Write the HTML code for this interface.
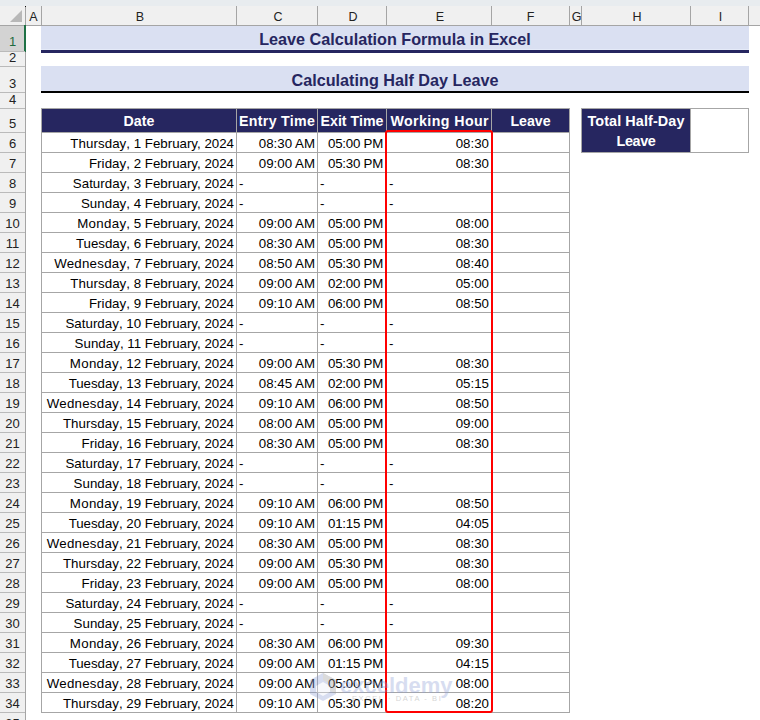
<!DOCTYPE html>
<html><head><meta charset="utf-8"><style>
html,body{margin:0;padding:0;}
body{width:760px;height:720px;overflow:hidden;position:relative;background:#fff;font-family:"Liberation Sans",sans-serif;}
body>div{position:absolute;box-sizing:content-box;}
.ch{text-align:center;font-size:12.5px;line-height:20px;color:#222;}
.rh{text-align:center;font-size:13px;}
.t1{text-align:center;font-weight:bold;font-size:16.2px;line-height:26px;color:#262660;}
.th{text-align:center;font-weight:bold;font-size:14.2px;line-height:24px;color:#fff;white-space:nowrap;}
.th2{text-align:center;font-weight:bold;font-size:14.4px;line-height:20px;color:#fff;white-space:nowrap;padding-top:2px;}
.td{text-align:right;font-size:13.3px;line-height:20px;color:#000;white-space:nowrap;}
.dash{text-align:left;}
</style></head><body>
<div style="left:0px;top:0px;width:760px;height:6px;background:#e8ecef"></div>
<div style="left:0px;top:6px;width:760px;height:19px;background:#f0f0f0"></div>
<div style="left:0px;top:25px;width:760px;height:1px;background:#a5a5a5"></div>
<svg style="position:absolute;left:0;top:6px" width="25" height="19"><polygon points="22,4 22,16 10,16" fill="#b8b8b8"/></svg>
<div style="left:25px;top:6px;width:1px;height:19px;background:#a5a5a5"></div>
<div class="ch" style="left:26px;top:7px;width:15px;height:19px;">A</div>
<div style="left:41px;top:6px;width:1px;height:19px;background:#a5a5a5"></div>
<div class="ch" style="left:43px;top:7px;width:194px;height:19px;">B</div>
<div style="left:236px;top:6px;width:1px;height:19px;background:#a5a5a5"></div>
<div class="ch" style="left:238px;top:7px;width:80px;height:19px;">C</div>
<div style="left:317px;top:6px;width:1px;height:19px;background:#a5a5a5"></div>
<div class="ch" style="left:319px;top:7px;width:68px;height:19px;">D</div>
<div style="left:386px;top:6px;width:1px;height:19px;background:#a5a5a5"></div>
<div class="ch" style="left:388px;top:7px;width:104px;height:19px;">E</div>
<div style="left:491px;top:6px;width:1px;height:19px;background:#a5a5a5"></div>
<div class="ch" style="left:492px;top:7px;width:77px;height:19px;">F</div>
<div style="left:569px;top:6px;width:1px;height:19px;background:#a5a5a5"></div>
<div class="ch" style="left:571px;top:7px;width:11px;height:19px;">G</div>
<div style="left:581px;top:6px;width:1px;height:19px;background:#a5a5a5"></div>
<div class="ch" style="left:583px;top:7px;width:108px;height:19px;">H</div>
<div style="left:690px;top:6px;width:1px;height:19px;background:#a5a5a5"></div>
<div class="ch" style="left:692px;top:7px;width:57px;height:19px;">I</div>
<div style="left:748px;top:6px;width:1px;height:19px;background:#a5a5a5"></div>
<div style="left:0px;top:26px;width:25px;height:694px;background:#f0f0f0"></div>
<div style="left:25px;top:26px;width:1px;height:694px;background:#a5a5a5"></div>
<div style="left:0px;top:26px;width:24px;height:25px;background:#d3d3d3"></div>
<div style="left:24px;top:25px;width:2px;height:27px;background:#1e7145"></div>
<div style="left:25px;top:6px;width:1px;height:1px;background:#111"></div>
<div style="left:0px;top:51px;width:25px;height:1px;background:#bababa"></div>
<div class="rh" style="left:0px;top:32px;width:25px;height:20px;line-height:20px;color:#1e6b3e">1</div>
<div style="left:0px;top:66px;width:25px;height:1px;background:#bababa"></div>
<div class="rh" style="left:0px;top:48px;width:25px;height:20px;line-height:20px;color:#222">2</div>
<div style="left:0px;top:92px;width:25px;height:1px;background:#bababa"></div>
<div class="rh" style="left:0px;top:74px;width:25px;height:20px;line-height:20px;color:#222">3</div>
<div style="left:0px;top:108px;width:25px;height:1px;background:#bababa"></div>
<div class="rh" style="left:0px;top:90px;width:25px;height:20px;line-height:20px;color:#222">4</div>
<div style="left:0px;top:132px;width:25px;height:1px;background:#bababa"></div>
<div class="rh" style="left:0px;top:114px;width:25px;height:20px;line-height:20px;color:#222">5</div>
<div style="left:0px;top:152px;width:25px;height:1px;background:#bababa"></div>
<div class="rh" style="left:0px;top:134px;width:25px;height:20px;line-height:20px;color:#222">6</div>
<div style="left:0px;top:172px;width:25px;height:1px;background:#bababa"></div>
<div class="rh" style="left:0px;top:154px;width:25px;height:20px;line-height:20px;color:#222">7</div>
<div style="left:0px;top:192px;width:25px;height:1px;background:#bababa"></div>
<div class="rh" style="left:0px;top:174px;width:25px;height:20px;line-height:20px;color:#222">8</div>
<div style="left:0px;top:212px;width:25px;height:1px;background:#bababa"></div>
<div class="rh" style="left:0px;top:194px;width:25px;height:20px;line-height:20px;color:#222">9</div>
<div style="left:0px;top:232px;width:25px;height:1px;background:#bababa"></div>
<div class="rh" style="left:0px;top:214px;width:25px;height:20px;line-height:20px;color:#222">10</div>
<div style="left:0px;top:252px;width:25px;height:1px;background:#bababa"></div>
<div class="rh" style="left:0px;top:234px;width:25px;height:20px;line-height:20px;color:#222">11</div>
<div style="left:0px;top:272px;width:25px;height:1px;background:#bababa"></div>
<div class="rh" style="left:0px;top:254px;width:25px;height:20px;line-height:20px;color:#222">12</div>
<div style="left:0px;top:292px;width:25px;height:1px;background:#bababa"></div>
<div class="rh" style="left:0px;top:274px;width:25px;height:20px;line-height:20px;color:#222">13</div>
<div style="left:0px;top:312px;width:25px;height:1px;background:#bababa"></div>
<div class="rh" style="left:0px;top:294px;width:25px;height:20px;line-height:20px;color:#222">14</div>
<div style="left:0px;top:332px;width:25px;height:1px;background:#bababa"></div>
<div class="rh" style="left:0px;top:314px;width:25px;height:20px;line-height:20px;color:#222">15</div>
<div style="left:0px;top:352px;width:25px;height:1px;background:#bababa"></div>
<div class="rh" style="left:0px;top:334px;width:25px;height:20px;line-height:20px;color:#222">16</div>
<div style="left:0px;top:372px;width:25px;height:1px;background:#bababa"></div>
<div class="rh" style="left:0px;top:354px;width:25px;height:20px;line-height:20px;color:#222">17</div>
<div style="left:0px;top:392px;width:25px;height:1px;background:#bababa"></div>
<div class="rh" style="left:0px;top:374px;width:25px;height:20px;line-height:20px;color:#222">18</div>
<div style="left:0px;top:412px;width:25px;height:1px;background:#bababa"></div>
<div class="rh" style="left:0px;top:394px;width:25px;height:20px;line-height:20px;color:#222">19</div>
<div style="left:0px;top:432px;width:25px;height:1px;background:#bababa"></div>
<div class="rh" style="left:0px;top:414px;width:25px;height:20px;line-height:20px;color:#222">20</div>
<div style="left:0px;top:452px;width:25px;height:1px;background:#bababa"></div>
<div class="rh" style="left:0px;top:434px;width:25px;height:20px;line-height:20px;color:#222">21</div>
<div style="left:0px;top:472px;width:25px;height:1px;background:#bababa"></div>
<div class="rh" style="left:0px;top:454px;width:25px;height:20px;line-height:20px;color:#222">22</div>
<div style="left:0px;top:492px;width:25px;height:1px;background:#bababa"></div>
<div class="rh" style="left:0px;top:474px;width:25px;height:20px;line-height:20px;color:#222">23</div>
<div style="left:0px;top:512px;width:25px;height:1px;background:#bababa"></div>
<div class="rh" style="left:0px;top:494px;width:25px;height:20px;line-height:20px;color:#222">24</div>
<div style="left:0px;top:532px;width:25px;height:1px;background:#bababa"></div>
<div class="rh" style="left:0px;top:514px;width:25px;height:20px;line-height:20px;color:#222">25</div>
<div style="left:0px;top:552px;width:25px;height:1px;background:#bababa"></div>
<div class="rh" style="left:0px;top:534px;width:25px;height:20px;line-height:20px;color:#222">26</div>
<div style="left:0px;top:572px;width:25px;height:1px;background:#bababa"></div>
<div class="rh" style="left:0px;top:554px;width:25px;height:20px;line-height:20px;color:#222">27</div>
<div style="left:0px;top:592px;width:25px;height:1px;background:#bababa"></div>
<div class="rh" style="left:0px;top:574px;width:25px;height:20px;line-height:20px;color:#222">28</div>
<div style="left:0px;top:612px;width:25px;height:1px;background:#bababa"></div>
<div class="rh" style="left:0px;top:594px;width:25px;height:20px;line-height:20px;color:#222">29</div>
<div style="left:0px;top:632px;width:25px;height:1px;background:#bababa"></div>
<div class="rh" style="left:0px;top:614px;width:25px;height:20px;line-height:20px;color:#222">30</div>
<div style="left:0px;top:652px;width:25px;height:1px;background:#bababa"></div>
<div class="rh" style="left:0px;top:634px;width:25px;height:20px;line-height:20px;color:#222">31</div>
<div style="left:0px;top:672px;width:25px;height:1px;background:#bababa"></div>
<div class="rh" style="left:0px;top:654px;width:25px;height:20px;line-height:20px;color:#222">32</div>
<div style="left:0px;top:692px;width:25px;height:1px;background:#bababa"></div>
<div class="rh" style="left:0px;top:674px;width:25px;height:20px;line-height:20px;color:#222">33</div>
<div style="left:0px;top:712px;width:25px;height:1px;background:#bababa"></div>
<div class="rh" style="left:0px;top:694px;width:25px;height:20px;line-height:20px;color:#222">34</div>
<div style="left:0px;top:732px;width:25px;height:1px;background:#bababa"></div>
<div class="rh" style="left:0px;top:714px;width:25px;height:20px;line-height:20px;color:#222">35</div>
<div style="left:41px;top:26px;width:708px;height:23px;background:#dae0f2"></div>
<div style="left:41px;top:49px;width:708px;height:1px;background:#e4eaf8"></div>
<div style="left:41px;top:50px;width:708px;height:3px;background:#262660"></div>
<div class="t1" style="left:41px;top:26px;width:708px;height:24px;">Leave Calculation Formula in Excel</div>
<div style="left:41px;top:66px;width:708px;height:25px;background:#dae0f2"></div>
<div style="left:41px;top:91px;width:708px;height:2px;background:#000"></div>
<div class="t1" style="left:41px;top:67px;width:708px;height:25px;">Calculating Half Day Leave</div>
<div style="left:41px;top:108px;width:529px;height:25px;background:#a6a6a6"></div>
<div style="left:42px;top:109px;width:194px;height:23px;background:#262660"></div>
<div class="th" style="left:42px;top:109px;width:194px;height:23px;">Date</div>
<div style="left:237px;top:109px;width:80px;height:23px;background:#262660"></div>
<div class="th" style="left:237px;top:109px;width:80px;height:23px;letter-spacing:0.3px;text-indent:0.3px;">Entry Time</div>
<div style="left:318px;top:109px;width:68px;height:23px;background:#262660"></div>
<div class="th" style="left:318px;top:109px;width:68px;height:23px;">Exit Time</div>
<div style="left:387px;top:109px;width:104px;height:23px;background:#262660"></div>
<div class="th" style="left:387px;top:109px;width:104px;height:23px;letter-spacing:0.42px;text-indent:1.5px;">Working Hour</div>
<div style="left:492px;top:109px;width:77px;height:23px;background:#262660"></div>
<div class="th" style="left:492px;top:109px;width:77px;height:23px;">Leave</div>
<div style="left:41px;top:132px;width:529px;height:581px;background:#a6a6a6"></div>
<div style="left:42px;top:133px;width:194px;height:19px;background:#fff"></div>
<div style="left:237px;top:133px;width:80px;height:19px;background:#fff"></div>
<div style="left:318px;top:133px;width:68px;height:19px;background:#fff"></div>
<div style="left:387px;top:133px;width:104px;height:19px;background:#fff"></div>
<div style="left:492px;top:133px;width:77px;height:19px;background:#fff"></div>
<div class="td" style="left:42px;top:134px;width:192px;height:19px;"><span style="letter-spacing:0.075px">Thursday</span>, 1 February, 2024</div>
<div class="td" style="left:237px;top:134px;width:78px;height:19px;">08:30 AM</div>
<div class="td" style="left:318px;top:134px;width:65px;height:19px;letter-spacing:-0.25px;">05:00 PM</div>
<div class="td" style="left:387px;top:134px;width:102px;height:19px;">08:30</div>
<div style="left:42px;top:153px;width:194px;height:19px;background:#fff"></div>
<div style="left:237px;top:153px;width:80px;height:19px;background:#fff"></div>
<div style="left:318px;top:153px;width:68px;height:19px;background:#fff"></div>
<div style="left:387px;top:153px;width:104px;height:19px;background:#fff"></div>
<div style="left:492px;top:153px;width:77px;height:19px;background:#fff"></div>
<div class="td" style="left:42px;top:154px;width:192px;height:19px;"><span style="letter-spacing:0.083px">Friday</span>, 2 February, 2024</div>
<div class="td" style="left:237px;top:154px;width:78px;height:19px;">09:00 AM</div>
<div class="td" style="left:318px;top:154px;width:65px;height:19px;letter-spacing:-0.25px;">05:30 PM</div>
<div class="td" style="left:387px;top:154px;width:102px;height:19px;">08:30</div>
<div style="left:42px;top:173px;width:194px;height:19px;background:#fff"></div>
<div style="left:237px;top:173px;width:80px;height:19px;background:#fff"></div>
<div style="left:318px;top:173px;width:68px;height:19px;background:#fff"></div>
<div style="left:387px;top:173px;width:104px;height:19px;background:#fff"></div>
<div style="left:492px;top:173px;width:77px;height:19px;background:#fff"></div>
<div class="td" style="left:42px;top:174px;width:192px;height:19px;"><span style="letter-spacing:0.037px">Saturday</span>, 3 February, 2024</div>
<div class="td dash" style="left:239px;top:174px;width:78px;height:19px;">-</div>
<div class="td dash" style="left:320px;top:174px;width:66px;height:19px;">-</div>
<div class="td dash" style="left:389px;top:174px;width:102px;height:19px;">-</div>
<div style="left:42px;top:193px;width:194px;height:19px;background:#fff"></div>
<div style="left:237px;top:193px;width:80px;height:19px;background:#fff"></div>
<div style="left:318px;top:193px;width:68px;height:19px;background:#fff"></div>
<div style="left:387px;top:193px;width:104px;height:19px;background:#fff"></div>
<div style="left:492px;top:193px;width:77px;height:19px;background:#fff"></div>
<div class="td" style="left:42px;top:194px;width:192px;height:19px;"><span style="letter-spacing:0.050px">Sunday</span>, 4 February, 2024</div>
<div class="td dash" style="left:239px;top:194px;width:78px;height:19px;">-</div>
<div class="td dash" style="left:320px;top:194px;width:66px;height:19px;">-</div>
<div class="td dash" style="left:389px;top:194px;width:102px;height:19px;">-</div>
<div style="left:42px;top:213px;width:194px;height:19px;background:#fff"></div>
<div style="left:237px;top:213px;width:80px;height:19px;background:#fff"></div>
<div style="left:318px;top:213px;width:68px;height:19px;background:#fff"></div>
<div style="left:387px;top:213px;width:104px;height:19px;background:#fff"></div>
<div style="left:492px;top:213px;width:77px;height:19px;background:#fff"></div>
<div class="td" style="left:42px;top:214px;width:192px;height:19px;"><span style="letter-spacing:0.300px">Monday</span>, 5 February, 2024</div>
<div class="td" style="left:237px;top:214px;width:78px;height:19px;">09:00 AM</div>
<div class="td" style="left:318px;top:214px;width:65px;height:19px;letter-spacing:-0.25px;">05:00 PM</div>
<div class="td" style="left:387px;top:214px;width:102px;height:19px;">08:00</div>
<div style="left:42px;top:233px;width:194px;height:19px;background:#fff"></div>
<div style="left:237px;top:233px;width:80px;height:19px;background:#fff"></div>
<div style="left:318px;top:233px;width:68px;height:19px;background:#fff"></div>
<div style="left:387px;top:233px;width:104px;height:19px;background:#fff"></div>
<div style="left:492px;top:233px;width:77px;height:19px;background:#fff"></div>
<div class="td" style="left:42px;top:234px;width:192px;height:19px;"><span style="letter-spacing:-0.029px">Tuesday</span>, 6 February, 2024</div>
<div class="td" style="left:237px;top:234px;width:78px;height:19px;">08:30 AM</div>
<div class="td" style="left:318px;top:234px;width:65px;height:19px;letter-spacing:-0.25px;">05:00 PM</div>
<div class="td" style="left:387px;top:234px;width:102px;height:19px;">08:30</div>
<div style="left:42px;top:253px;width:194px;height:19px;background:#fff"></div>
<div style="left:237px;top:253px;width:80px;height:19px;background:#fff"></div>
<div style="left:318px;top:253px;width:68px;height:19px;background:#fff"></div>
<div style="left:387px;top:253px;width:104px;height:19px;background:#fff"></div>
<div style="left:492px;top:253px;width:77px;height:19px;background:#fff"></div>
<div class="td" style="left:42px;top:254px;width:192px;height:19px;"><span style="letter-spacing:0.244px">Wednesday</span>, 7 February, 2024</div>
<div class="td" style="left:237px;top:254px;width:78px;height:19px;">08:50 AM</div>
<div class="td" style="left:318px;top:254px;width:65px;height:19px;letter-spacing:-0.25px;">05:30 PM</div>
<div class="td" style="left:387px;top:254px;width:102px;height:19px;">08:40</div>
<div style="left:42px;top:273px;width:194px;height:19px;background:#fff"></div>
<div style="left:237px;top:273px;width:80px;height:19px;background:#fff"></div>
<div style="left:318px;top:273px;width:68px;height:19px;background:#fff"></div>
<div style="left:387px;top:273px;width:104px;height:19px;background:#fff"></div>
<div style="left:492px;top:273px;width:77px;height:19px;background:#fff"></div>
<div class="td" style="left:42px;top:274px;width:192px;height:19px;"><span style="letter-spacing:0.075px">Thursday</span>, 8 February, 2024</div>
<div class="td" style="left:237px;top:274px;width:78px;height:19px;">09:00 AM</div>
<div class="td" style="left:318px;top:274px;width:65px;height:19px;letter-spacing:-0.25px;">02:00 PM</div>
<div class="td" style="left:387px;top:274px;width:102px;height:19px;">05:00</div>
<div style="left:42px;top:293px;width:194px;height:19px;background:#fff"></div>
<div style="left:237px;top:293px;width:80px;height:19px;background:#fff"></div>
<div style="left:318px;top:293px;width:68px;height:19px;background:#fff"></div>
<div style="left:387px;top:293px;width:104px;height:19px;background:#fff"></div>
<div style="left:492px;top:293px;width:77px;height:19px;background:#fff"></div>
<div class="td" style="left:42px;top:294px;width:192px;height:19px;"><span style="letter-spacing:0.083px">Friday</span>, 9 February, 2024</div>
<div class="td" style="left:237px;top:294px;width:78px;height:19px;">09:10 AM</div>
<div class="td" style="left:318px;top:294px;width:65px;height:19px;letter-spacing:-0.25px;">06:00 PM</div>
<div class="td" style="left:387px;top:294px;width:102px;height:19px;">08:50</div>
<div style="left:42px;top:313px;width:194px;height:19px;background:#fff"></div>
<div style="left:237px;top:313px;width:80px;height:19px;background:#fff"></div>
<div style="left:318px;top:313px;width:68px;height:19px;background:#fff"></div>
<div style="left:387px;top:313px;width:104px;height:19px;background:#fff"></div>
<div style="left:492px;top:313px;width:77px;height:19px;background:#fff"></div>
<div class="td" style="left:42px;top:314px;width:192px;height:19px;"><span style="letter-spacing:0.037px">Saturday</span>, 10 February, 2024</div>
<div class="td dash" style="left:239px;top:314px;width:78px;height:19px;">-</div>
<div class="td dash" style="left:320px;top:314px;width:66px;height:19px;">-</div>
<div class="td dash" style="left:389px;top:314px;width:102px;height:19px;">-</div>
<div style="left:42px;top:333px;width:194px;height:19px;background:#fff"></div>
<div style="left:237px;top:333px;width:80px;height:19px;background:#fff"></div>
<div style="left:318px;top:333px;width:68px;height:19px;background:#fff"></div>
<div style="left:387px;top:333px;width:104px;height:19px;background:#fff"></div>
<div style="left:492px;top:333px;width:77px;height:19px;background:#fff"></div>
<div class="td" style="left:42px;top:334px;width:192px;height:19px;"><span style="letter-spacing:0.050px">Sunday</span>, 11 February, 2024</div>
<div class="td dash" style="left:239px;top:334px;width:78px;height:19px;">-</div>
<div class="td dash" style="left:320px;top:334px;width:66px;height:19px;">-</div>
<div class="td dash" style="left:389px;top:334px;width:102px;height:19px;">-</div>
<div style="left:42px;top:353px;width:194px;height:19px;background:#fff"></div>
<div style="left:237px;top:353px;width:80px;height:19px;background:#fff"></div>
<div style="left:318px;top:353px;width:68px;height:19px;background:#fff"></div>
<div style="left:387px;top:353px;width:104px;height:19px;background:#fff"></div>
<div style="left:492px;top:353px;width:77px;height:19px;background:#fff"></div>
<div class="td" style="left:42px;top:354px;width:192px;height:19px;"><span style="letter-spacing:0.300px">Monday</span>, 12 February, 2024</div>
<div class="td" style="left:237px;top:354px;width:78px;height:19px;">09:00 AM</div>
<div class="td" style="left:318px;top:354px;width:65px;height:19px;letter-spacing:-0.25px;">05:30 PM</div>
<div class="td" style="left:387px;top:354px;width:102px;height:19px;">08:30</div>
<div style="left:42px;top:373px;width:194px;height:19px;background:#fff"></div>
<div style="left:237px;top:373px;width:80px;height:19px;background:#fff"></div>
<div style="left:318px;top:373px;width:68px;height:19px;background:#fff"></div>
<div style="left:387px;top:373px;width:104px;height:19px;background:#fff"></div>
<div style="left:492px;top:373px;width:77px;height:19px;background:#fff"></div>
<div class="td" style="left:42px;top:374px;width:192px;height:19px;"><span style="letter-spacing:-0.029px">Tuesday</span>, 13 February, 2024</div>
<div class="td" style="left:237px;top:374px;width:78px;height:19px;">08:45 AM</div>
<div class="td" style="left:318px;top:374px;width:65px;height:19px;letter-spacing:-0.25px;">02:00 PM</div>
<div class="td" style="left:387px;top:374px;width:102px;height:19px;">05:15</div>
<div style="left:42px;top:393px;width:194px;height:19px;background:#fff"></div>
<div style="left:237px;top:393px;width:80px;height:19px;background:#fff"></div>
<div style="left:318px;top:393px;width:68px;height:19px;background:#fff"></div>
<div style="left:387px;top:393px;width:104px;height:19px;background:#fff"></div>
<div style="left:492px;top:393px;width:77px;height:19px;background:#fff"></div>
<div class="td" style="left:42px;top:394px;width:192px;height:19px;"><span style="letter-spacing:0.244px">Wednesday</span>, 14 February, 2024</div>
<div class="td" style="left:237px;top:394px;width:78px;height:19px;">09:10 AM</div>
<div class="td" style="left:318px;top:394px;width:65px;height:19px;letter-spacing:-0.25px;">06:00 PM</div>
<div class="td" style="left:387px;top:394px;width:102px;height:19px;">08:50</div>
<div style="left:42px;top:413px;width:194px;height:19px;background:#fff"></div>
<div style="left:237px;top:413px;width:80px;height:19px;background:#fff"></div>
<div style="left:318px;top:413px;width:68px;height:19px;background:#fff"></div>
<div style="left:387px;top:413px;width:104px;height:19px;background:#fff"></div>
<div style="left:492px;top:413px;width:77px;height:19px;background:#fff"></div>
<div class="td" style="left:42px;top:414px;width:192px;height:19px;"><span style="letter-spacing:0.075px">Thursday</span>, 15 February, 2024</div>
<div class="td" style="left:237px;top:414px;width:78px;height:19px;">08:00 AM</div>
<div class="td" style="left:318px;top:414px;width:65px;height:19px;letter-spacing:-0.25px;">05:00 PM</div>
<div class="td" style="left:387px;top:414px;width:102px;height:19px;">09:00</div>
<div style="left:42px;top:433px;width:194px;height:19px;background:#fff"></div>
<div style="left:237px;top:433px;width:80px;height:19px;background:#fff"></div>
<div style="left:318px;top:433px;width:68px;height:19px;background:#fff"></div>
<div style="left:387px;top:433px;width:104px;height:19px;background:#fff"></div>
<div style="left:492px;top:433px;width:77px;height:19px;background:#fff"></div>
<div class="td" style="left:42px;top:434px;width:192px;height:19px;"><span style="letter-spacing:0.083px">Friday</span>, 16 February, 2024</div>
<div class="td" style="left:237px;top:434px;width:78px;height:19px;">08:30 AM</div>
<div class="td" style="left:318px;top:434px;width:65px;height:19px;letter-spacing:-0.25px;">05:00 PM</div>
<div class="td" style="left:387px;top:434px;width:102px;height:19px;">08:30</div>
<div style="left:42px;top:453px;width:194px;height:19px;background:#fff"></div>
<div style="left:237px;top:453px;width:80px;height:19px;background:#fff"></div>
<div style="left:318px;top:453px;width:68px;height:19px;background:#fff"></div>
<div style="left:387px;top:453px;width:104px;height:19px;background:#fff"></div>
<div style="left:492px;top:453px;width:77px;height:19px;background:#fff"></div>
<div class="td" style="left:42px;top:454px;width:192px;height:19px;"><span style="letter-spacing:0.037px">Saturday</span>, 17 February, 2024</div>
<div class="td dash" style="left:239px;top:454px;width:78px;height:19px;">-</div>
<div class="td dash" style="left:320px;top:454px;width:66px;height:19px;">-</div>
<div class="td dash" style="left:389px;top:454px;width:102px;height:19px;">-</div>
<div style="left:42px;top:473px;width:194px;height:19px;background:#fff"></div>
<div style="left:237px;top:473px;width:80px;height:19px;background:#fff"></div>
<div style="left:318px;top:473px;width:68px;height:19px;background:#fff"></div>
<div style="left:387px;top:473px;width:104px;height:19px;background:#fff"></div>
<div style="left:492px;top:473px;width:77px;height:19px;background:#fff"></div>
<div class="td" style="left:42px;top:474px;width:192px;height:19px;"><span style="letter-spacing:0.050px">Sunday</span>, 18 February, 2024</div>
<div class="td dash" style="left:239px;top:474px;width:78px;height:19px;">-</div>
<div class="td dash" style="left:320px;top:474px;width:66px;height:19px;">-</div>
<div class="td dash" style="left:389px;top:474px;width:102px;height:19px;">-</div>
<div style="left:42px;top:493px;width:194px;height:19px;background:#fff"></div>
<div style="left:237px;top:493px;width:80px;height:19px;background:#fff"></div>
<div style="left:318px;top:493px;width:68px;height:19px;background:#fff"></div>
<div style="left:387px;top:493px;width:104px;height:19px;background:#fff"></div>
<div style="left:492px;top:493px;width:77px;height:19px;background:#fff"></div>
<div class="td" style="left:42px;top:494px;width:192px;height:19px;"><span style="letter-spacing:0.300px">Monday</span>, 19 February, 2024</div>
<div class="td" style="left:237px;top:494px;width:78px;height:19px;">09:10 AM</div>
<div class="td" style="left:318px;top:494px;width:65px;height:19px;letter-spacing:-0.25px;">06:00 PM</div>
<div class="td" style="left:387px;top:494px;width:102px;height:19px;">08:50</div>
<div style="left:42px;top:513px;width:194px;height:19px;background:#fff"></div>
<div style="left:237px;top:513px;width:80px;height:19px;background:#fff"></div>
<div style="left:318px;top:513px;width:68px;height:19px;background:#fff"></div>
<div style="left:387px;top:513px;width:104px;height:19px;background:#fff"></div>
<div style="left:492px;top:513px;width:77px;height:19px;background:#fff"></div>
<div class="td" style="left:42px;top:514px;width:192px;height:19px;"><span style="letter-spacing:-0.029px">Tuesday</span>, 20 February, 2024</div>
<div class="td" style="left:237px;top:514px;width:78px;height:19px;">09:10 AM</div>
<div class="td" style="left:318px;top:514px;width:65px;height:19px;letter-spacing:-0.25px;">01:15 PM</div>
<div class="td" style="left:387px;top:514px;width:102px;height:19px;">04:05</div>
<div style="left:42px;top:533px;width:194px;height:19px;background:#fff"></div>
<div style="left:237px;top:533px;width:80px;height:19px;background:#fff"></div>
<div style="left:318px;top:533px;width:68px;height:19px;background:#fff"></div>
<div style="left:387px;top:533px;width:104px;height:19px;background:#fff"></div>
<div style="left:492px;top:533px;width:77px;height:19px;background:#fff"></div>
<div class="td" style="left:42px;top:534px;width:192px;height:19px;"><span style="letter-spacing:0.244px">Wednesday</span>, 21 February, 2024</div>
<div class="td" style="left:237px;top:534px;width:78px;height:19px;">08:30 AM</div>
<div class="td" style="left:318px;top:534px;width:65px;height:19px;letter-spacing:-0.25px;">05:00 PM</div>
<div class="td" style="left:387px;top:534px;width:102px;height:19px;">08:30</div>
<div style="left:42px;top:553px;width:194px;height:19px;background:#fff"></div>
<div style="left:237px;top:553px;width:80px;height:19px;background:#fff"></div>
<div style="left:318px;top:553px;width:68px;height:19px;background:#fff"></div>
<div style="left:387px;top:553px;width:104px;height:19px;background:#fff"></div>
<div style="left:492px;top:553px;width:77px;height:19px;background:#fff"></div>
<div class="td" style="left:42px;top:554px;width:192px;height:19px;"><span style="letter-spacing:0.075px">Thursday</span>, 22 February, 2024</div>
<div class="td" style="left:237px;top:554px;width:78px;height:19px;">09:00 AM</div>
<div class="td" style="left:318px;top:554px;width:65px;height:19px;letter-spacing:-0.25px;">05:30 PM</div>
<div class="td" style="left:387px;top:554px;width:102px;height:19px;">08:30</div>
<div style="left:42px;top:573px;width:194px;height:19px;background:#fff"></div>
<div style="left:237px;top:573px;width:80px;height:19px;background:#fff"></div>
<div style="left:318px;top:573px;width:68px;height:19px;background:#fff"></div>
<div style="left:387px;top:573px;width:104px;height:19px;background:#fff"></div>
<div style="left:492px;top:573px;width:77px;height:19px;background:#fff"></div>
<div class="td" style="left:42px;top:574px;width:192px;height:19px;"><span style="letter-spacing:0.083px">Friday</span>, 23 February, 2024</div>
<div class="td" style="left:237px;top:574px;width:78px;height:19px;">09:00 AM</div>
<div class="td" style="left:318px;top:574px;width:65px;height:19px;letter-spacing:-0.25px;">05:00 PM</div>
<div class="td" style="left:387px;top:574px;width:102px;height:19px;">08:00</div>
<div style="left:42px;top:593px;width:194px;height:19px;background:#fff"></div>
<div style="left:237px;top:593px;width:80px;height:19px;background:#fff"></div>
<div style="left:318px;top:593px;width:68px;height:19px;background:#fff"></div>
<div style="left:387px;top:593px;width:104px;height:19px;background:#fff"></div>
<div style="left:492px;top:593px;width:77px;height:19px;background:#fff"></div>
<div class="td" style="left:42px;top:594px;width:192px;height:19px;"><span style="letter-spacing:0.037px">Saturday</span>, 24 February, 2024</div>
<div class="td dash" style="left:239px;top:594px;width:78px;height:19px;">-</div>
<div class="td dash" style="left:320px;top:594px;width:66px;height:19px;">-</div>
<div class="td dash" style="left:389px;top:594px;width:102px;height:19px;">-</div>
<div style="left:42px;top:613px;width:194px;height:19px;background:#fff"></div>
<div style="left:237px;top:613px;width:80px;height:19px;background:#fff"></div>
<div style="left:318px;top:613px;width:68px;height:19px;background:#fff"></div>
<div style="left:387px;top:613px;width:104px;height:19px;background:#fff"></div>
<div style="left:492px;top:613px;width:77px;height:19px;background:#fff"></div>
<div class="td" style="left:42px;top:614px;width:192px;height:19px;"><span style="letter-spacing:0.050px">Sunday</span>, 25 February, 2024</div>
<div class="td dash" style="left:239px;top:614px;width:78px;height:19px;">-</div>
<div class="td dash" style="left:320px;top:614px;width:66px;height:19px;">-</div>
<div class="td dash" style="left:389px;top:614px;width:102px;height:19px;">-</div>
<div style="left:42px;top:633px;width:194px;height:19px;background:#fff"></div>
<div style="left:237px;top:633px;width:80px;height:19px;background:#fff"></div>
<div style="left:318px;top:633px;width:68px;height:19px;background:#fff"></div>
<div style="left:387px;top:633px;width:104px;height:19px;background:#fff"></div>
<div style="left:492px;top:633px;width:77px;height:19px;background:#fff"></div>
<div class="td" style="left:42px;top:634px;width:192px;height:19px;"><span style="letter-spacing:0.300px">Monday</span>, 26 February, 2024</div>
<div class="td" style="left:237px;top:634px;width:78px;height:19px;">08:30 AM</div>
<div class="td" style="left:318px;top:634px;width:65px;height:19px;letter-spacing:-0.25px;">06:00 PM</div>
<div class="td" style="left:387px;top:634px;width:102px;height:19px;">09:30</div>
<div style="left:42px;top:653px;width:194px;height:19px;background:#fff"></div>
<div style="left:237px;top:653px;width:80px;height:19px;background:#fff"></div>
<div style="left:318px;top:653px;width:68px;height:19px;background:#fff"></div>
<div style="left:387px;top:653px;width:104px;height:19px;background:#fff"></div>
<div style="left:492px;top:653px;width:77px;height:19px;background:#fff"></div>
<div class="td" style="left:42px;top:654px;width:192px;height:19px;"><span style="letter-spacing:-0.029px">Tuesday</span>, 27 February, 2024</div>
<div class="td" style="left:237px;top:654px;width:78px;height:19px;">09:00 AM</div>
<div class="td" style="left:318px;top:654px;width:65px;height:19px;letter-spacing:-0.25px;">01:15 PM</div>
<div class="td" style="left:387px;top:654px;width:102px;height:19px;">04:15</div>
<div style="left:42px;top:673px;width:194px;height:19px;background:#fff"></div>
<div style="left:237px;top:673px;width:80px;height:19px;background:#fff"></div>
<div style="left:318px;top:673px;width:68px;height:19px;background:#fff"></div>
<div style="left:387px;top:673px;width:104px;height:19px;background:#fff"></div>
<div style="left:492px;top:673px;width:77px;height:19px;background:#fff"></div>
<div class="td" style="left:42px;top:674px;width:192px;height:19px;"><span style="letter-spacing:0.244px">Wednesday</span>, 28 February, 2024</div>
<div class="td" style="left:237px;top:674px;width:78px;height:19px;">09:00 AM</div>
<div class="td" style="left:318px;top:674px;width:65px;height:19px;letter-spacing:-0.25px;">05:00 PM</div>
<div class="td" style="left:387px;top:674px;width:102px;height:19px;">08:00</div>
<div style="left:42px;top:693px;width:194px;height:19px;background:#fff"></div>
<div style="left:237px;top:693px;width:80px;height:19px;background:#fff"></div>
<div style="left:318px;top:693px;width:68px;height:19px;background:#fff"></div>
<div style="left:387px;top:693px;width:104px;height:19px;background:#fff"></div>
<div style="left:492px;top:693px;width:77px;height:19px;background:#fff"></div>
<div class="td" style="left:42px;top:694px;width:192px;height:19px;"><span style="letter-spacing:0.075px">Thursday</span>, 29 February, 2024</div>
<div class="td" style="left:237px;top:694px;width:78px;height:19px;">09:10 AM</div>
<div class="td" style="left:318px;top:694px;width:65px;height:19px;letter-spacing:-0.25px;">05:30 PM</div>
<div class="td" style="left:387px;top:694px;width:102px;height:19px;">08:20</div>
<div style="left:581px;top:108px;width:168px;height:45px;background:#a6a6a6"></div>
<div style="left:582px;top:109px;width:108px;height:43px;background:#262660"></div>
<div style="left:691px;top:109px;width:57px;height:43px;background:#fff"></div>
<div class="th2" style="left:582px;top:109px;width:108px;height:43px;"><span style="letter-spacing:0.1px">Total Half-Day</span><br><span style="letter-spacing:-0.35px">Leave</span></div>
<div style="left:385px;top:130px;width:104px;height:579px;border:2px solid #ff0000;border-radius:3px;background:transparent"></div>
<svg style="position:absolute;left:300px;top:665px;opacity:0.35" width="170" height="45">
<polygon points="23,8 36,15 36,29 23,36 10,29 10,15" fill="#8f9fd6"/><polygon points="23,8 36,15 36,29 30,26 30,19 23,15" fill="#9a9a9a"/><polygon points="23,17 30,21 30,27 23,31 16,27 16,21" fill="#fff" opacity="0.8"/>
<text x="40" y="28" font-family="Liberation Sans" font-weight="bold" font-size="22" fill="#8f9fd6">exceldemy</text>
<text x="52" y="36" font-family="Liberation Sans" font-size="7.5" fill="#888" letter-spacing="1.6">EXCEL · DATA - BI</text>
</svg>
</body></html>
